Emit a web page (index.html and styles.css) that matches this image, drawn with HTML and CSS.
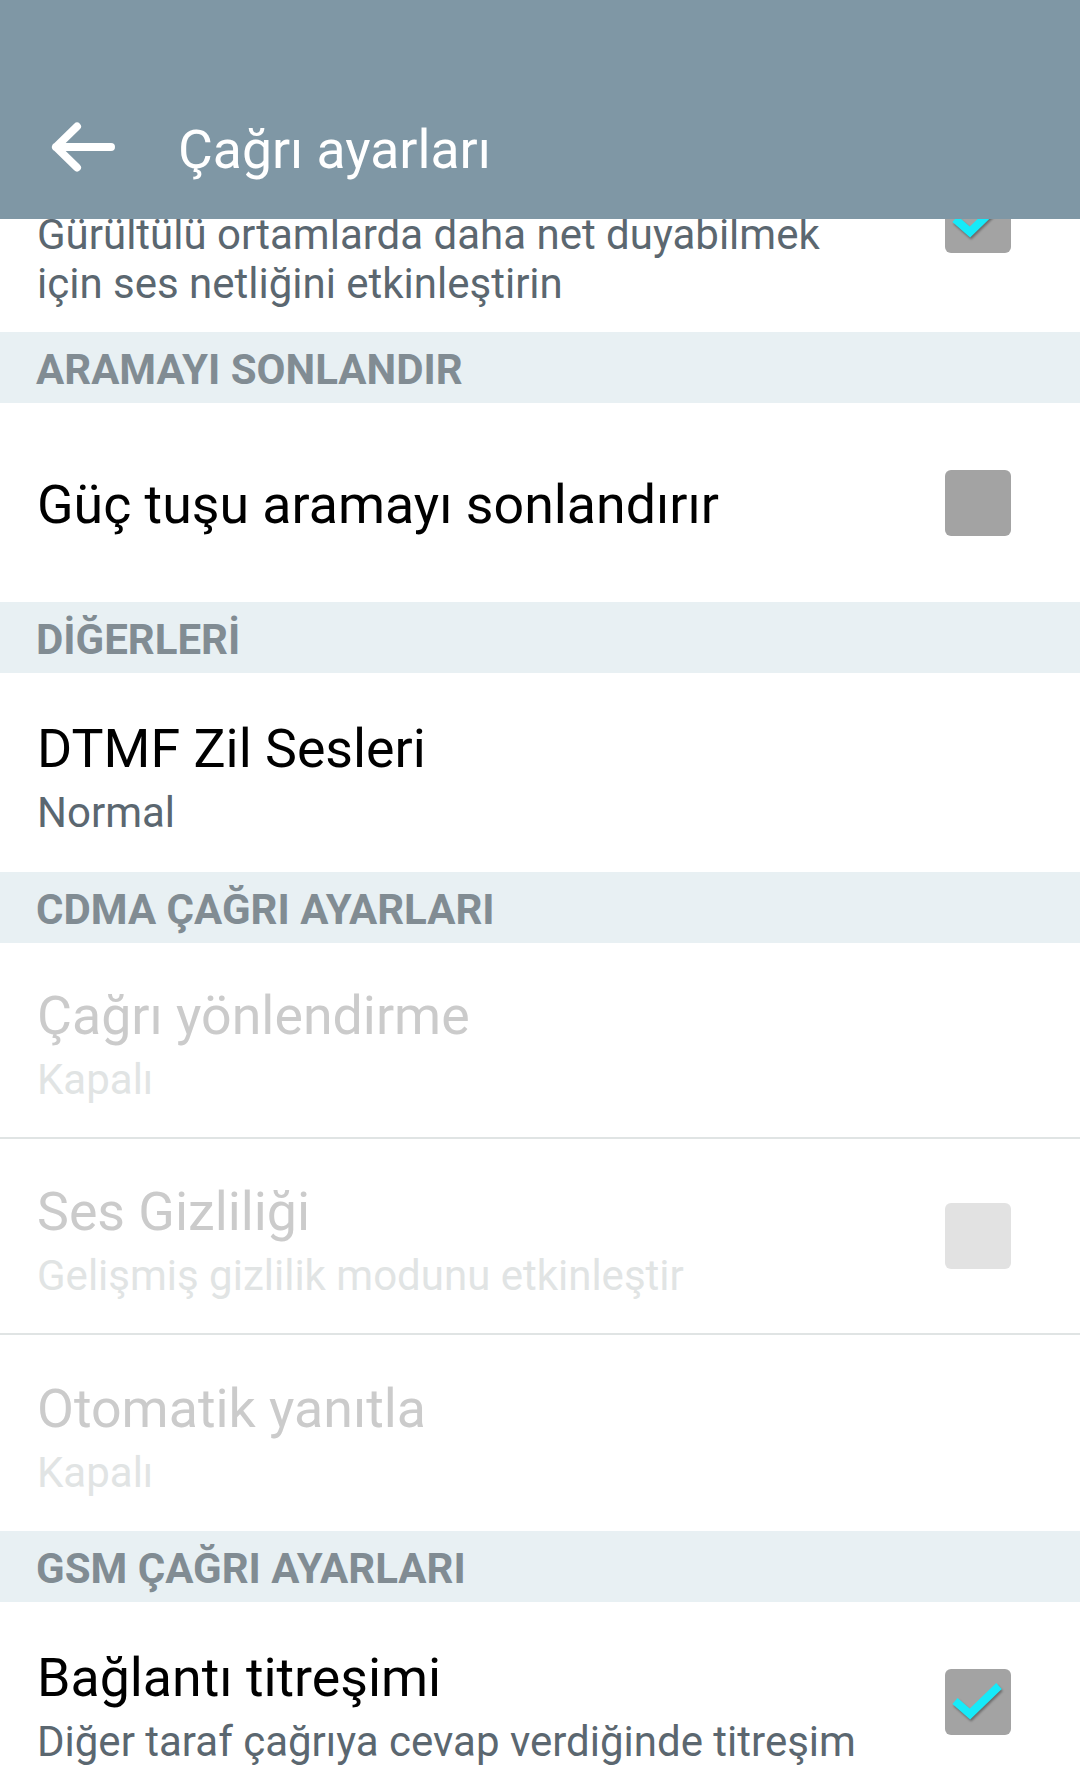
FILE: index.html
```html
<!DOCTYPE html>
<html lang="tr">
<head>
<meta charset="utf-8">
<title>Çağrı ayarları</title>
<link rel="stylesheet" href="styles.css">
</head>
<body>
<div class="screen">
  <header class="appbar">
    <div class="toolbar">
      <svg class="back" width="68" height="56" viewBox="0 0 68 56" aria-hidden="true">
        <path d="M6 28 H61 M27 7.5 L6 28 L27 48.5" fill="none" stroke="#ffffff" stroke-width="8" stroke-linecap="round" stroke-linejoin="round"/>
      </svg>
      <h1 class="apptitle">Çağrı ayarları</h1>
    </div>
  </header>
  <main class="list">
    <div class="item partial">
      <div class="text">
        <p class="summary">Gürültülü ortamlarda daha net duyabilmek için ses netliğini etkinleştirin</p>
      </div>
      <span class="checkbox"><svg class="check" width="66" height="66" viewBox="0 0 66 66"><polyline points="10,32 25,45 54,17" fill="none" stroke="#16eaf9" stroke-width="8"/></svg></span>
    </div>

    <div class="section">ARAMAYI SONLANDIR</div>
    <div class="item">
      <div class="text single">
        <p class="label">Güç tuşu aramayı sonlandırır</p>
      </div>
      <span class="checkbox"></span>
    </div>

    <div class="section">DİĞERLERİ</div>
    <div class="item">
      <div class="text two">
        <p class="label">DTMF Zil Sesleri</p>
        <p class="summary">Normal</p>
      </div>
    </div>

    <div class="section">CDMA ÇAĞRI AYARLARI</div>
    <div class="item compact divided disabled">
      <div class="text two">
        <p class="label">Çağrı yönlendirme</p>
        <p class="summary">Kapalı</p>
      </div>
    </div>
    <div class="item compact divided disabled">
      <div class="text two">
        <p class="label">Ses Gizliliği</p>
        <p class="summary">Gelişmiş gizlilik modunu etkinleştir</p>
      </div>
      <span class="checkbox off"></span>
    </div>
    <div class="item compact disabled">
      <div class="text two">
        <p class="label">Otomatik yanıtla</p>
        <p class="summary">Kapalı</p>
      </div>
    </div>

    <div class="section">GSM ÇAĞRI AYARLARI</div>
    <div class="item">
      <div class="text two">
        <p class="label">Bağlantı titreşimi</p>
        <p class="summary">Diğer taraf çağrıya cevap verdiğinde titreşim</p>
      </div>
      <span class="checkbox"><svg class="check" width="66" height="66" viewBox="0 0 66 66"><polyline points="10,32 25,45 54,17" fill="none" stroke="#16eaf9" stroke-width="8"/></svg></span>
    </div>
  </main>
</div>
</body>
</html>
```

FILE: styles.css
```css
html, body {
  margin: 0;
  padding: 0;
  background: #ffffff;
}

body {
  font-family: Roboto, "Noto Sans", "Liberation Sans", sans-serif;
}

p, h1 {
  margin: 0;
}

.screen {
  width: 1080px;
  height: 1776px;
  display: flex;
  flex-direction: column;
  overflow: hidden;
}

.appbar {
  flex-shrink: 0;
  height: 219px;
  background: #7f97a5;
  display: flex;
  align-items: flex-end;
  position: relative;
  z-index: 1;
}

.toolbar {
  height: 144px;
  display: flex;
  align-items: center;
  padding-left: 50px;
}

.back {
  display: block;
  flex-shrink: 0;
}

.apptitle {
  margin-left: 60px;
  padding-top: 6px;
  font-size: 53.5px;
  line-height: 62px;
  font-weight: 400;
  color: #ffffff;
}

.list {
  flex: 1;
  overflow: hidden;
}

.item {
  display: flex;
  align-items: center;
  min-height: 199px;
  box-sizing: border-box;
  padding: 0 69px 0 37px;
}

.item.compact {
  min-height: 196px;
}

.item.divided {
  border-bottom: 2px solid #e0e4e4;
}

.item.partial {
  margin-top: -112px;
  min-height: 225px;
}

.text {
  flex: 1;
  min-width: 0;
}

.text.single {
  padding-top: 4px;
}

.text.two {
  padding-top: 9px;
}

.partial .text {
  align-self: flex-end;
  padding-bottom: 24px;
}

.label {
  font-size: 53.7px;
  line-height: 64px;
  color: #000000;
}

.summary {
  margin-top: 7px;
  font-size: 42px;
  line-height: 50px;
  color: #5b6770;
}

.partial .summary {
  margin-top: 0;
  line-height: 49px;
}

.disabled .label {
  color: #cbcbcb;
}

.disabled .summary {
  color: #e1e4e4;
}

.section {
  height: 71px;
  box-sizing: border-box;
  padding: 4px 0 0 36px;
  background: #e8f0f3;
  font-size: 42px;
  line-height: 67px;
  font-weight: 700;
  color: #818c93;
}

.checkbox {
  flex-shrink: 0;
  width: 66px;
  height: 66px;
  margin-left: 72px;
  border-radius: 6px;
  background: #a3a3a3;
  display: block;
}

.checkbox.off {
  background: #e2e2e2;
}

.check {
  display: block;
  filter: drop-shadow(1px 2px 1px rgba(0, 0, 0, 0.35));
}
```
